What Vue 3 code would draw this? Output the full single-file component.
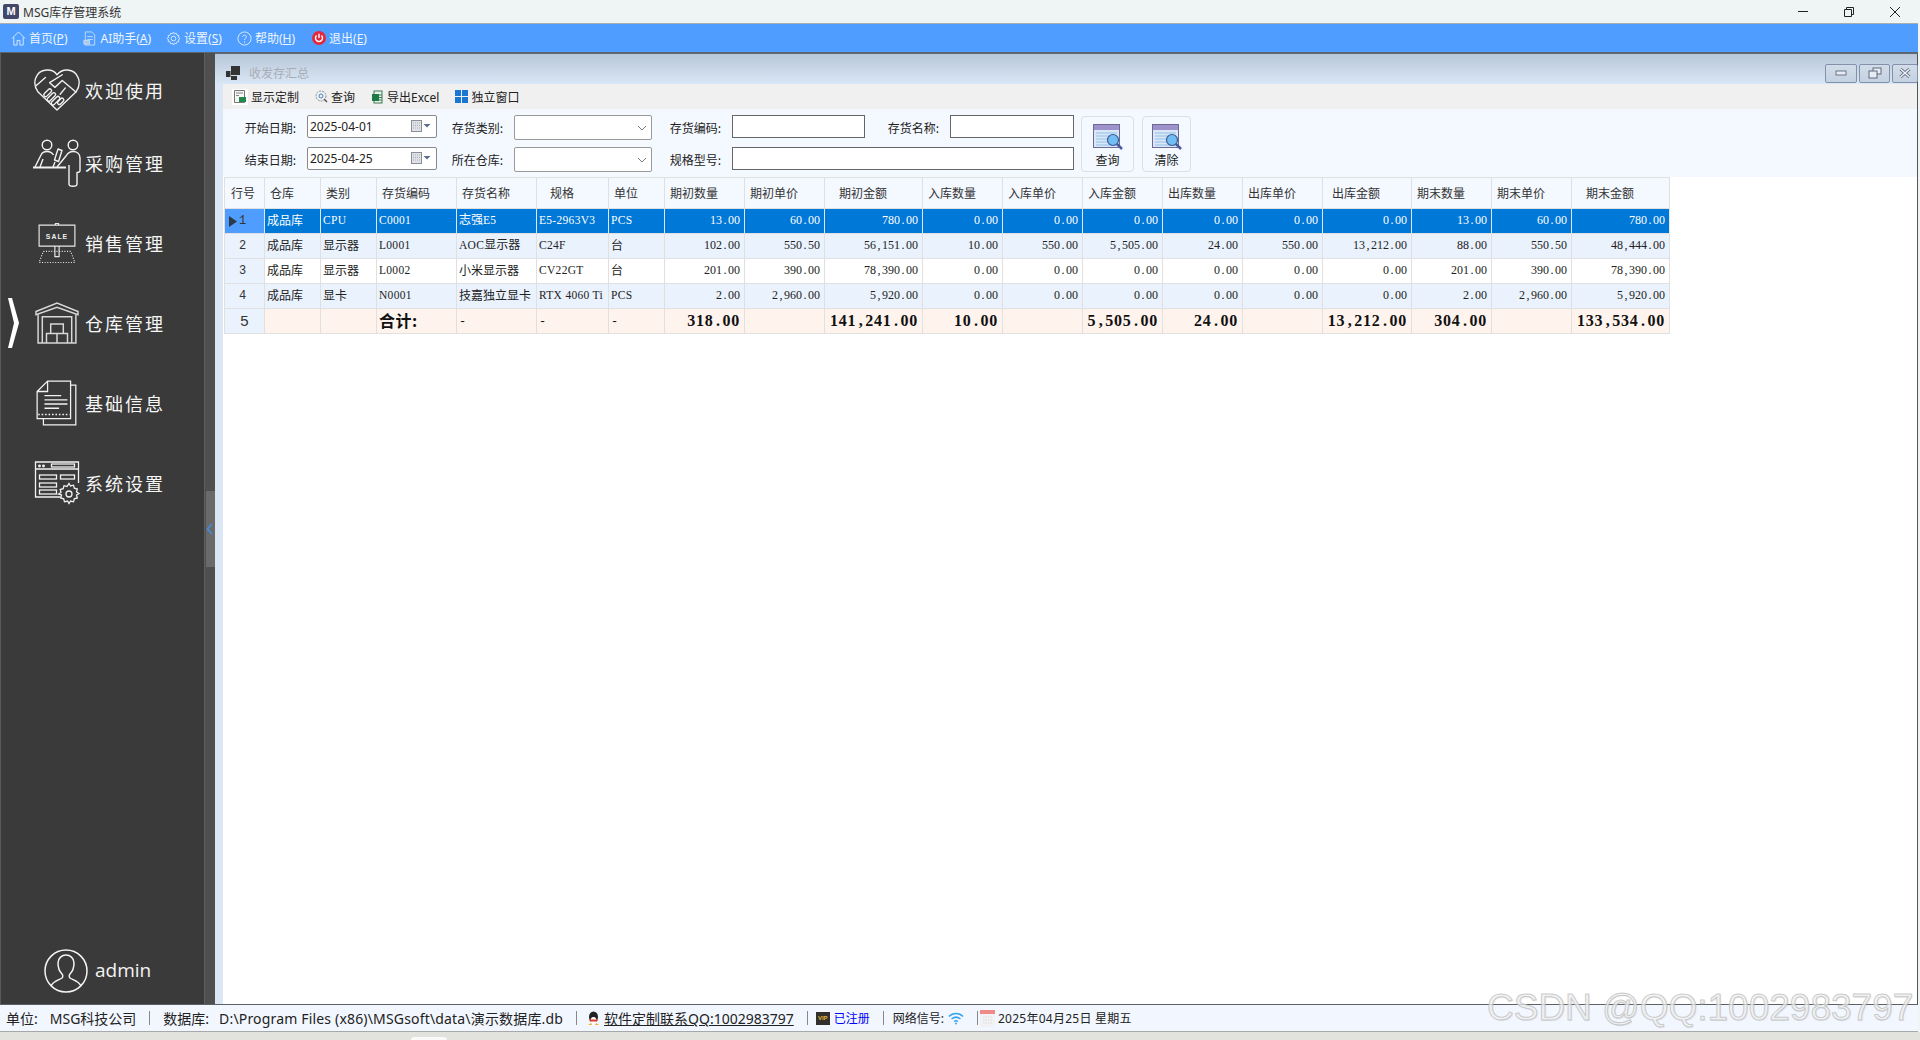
<script setup>
const columns = [
  { t: '行号', w: 40, p: 6 }, { t: '仓库', w: 56, p: 5 }, { t: '类别', w: 56, p: 5 }, { t: '存货编码', w: 80, p: 5 },
  { t: '存货名称', w: 80, p: 5 }, { t: '规格', w: 72, p: 13 }, { t: '单位', w: 56, p: 5 }, { t: '期初数量', w: 80, p: 5 },
  { t: '期初单价', w: 80, p: 5 }, { t: '期初金额', w: 98, p: 14 }, { t: '入库数量', w: 80, p: 5 }, { t: '入库单价', w: 80, p: 5 },
  { t: '入库金额', w: 80, p: 5 }, { t: '出库数量', w: 80, p: 5 }, { t: '出库单价', w: 80, p: 5 }, { t: '出库金额', w: 89, p: 9 },
  { t: '期末数量', w: 80, p: 5 }, { t: '期末单价', w: 80, p: 5 }, { t: '期末金额', w: 98, p: 14 }
]
const rows = [
  ['成品库', 'CPU', 'C0001', '志强E5', 'E5-2963V3', 'PCS', '13.00', '60.00', '780.00', '0.00', '0.00', '0.00', '0.00', '0.00', '0.00', '13.00', '60.00', '780.00'],
  ['成品库', '显示器', 'L0001', 'AOC显示器', 'C24F', '台', '102.00', '550.50', '56,151.00', '10.00', '550.00', '5,505.00', '24.00', '550.00', '13,212.00', '88.00', '550.50', '48,444.00'],
  ['成品库', '显示器', 'L0002', '小米显示器', 'CV22GT', '台', '201.00', '390.00', '78,390.00', '0.00', '0.00', '0.00', '0.00', '0.00', '0.00', '201.00', '390.00', '78,390.00'],
  ['成品库', '显卡', 'N0001', '技嘉独立显卡', 'RTX 4060 Ti', 'PCS', '2.00', '2,960.00', '5,920.00', '0.00', '0.00', '0.00', '0.00', '0.00', '0.00', '2.00', '2,960.00', '5,920.00']
]
const total = ['', '', '合计:', '-', '-', '-', '318.00', '', '141,241.00', '10.00', '', '5,505.00', '24.00', '', '13,212.00', '304.00', '', '133,534.00']
const segs = (s) => s.split(/([\u4e00-\u9fff:]+|[.,])/).filter(Boolean).map((x) => ({
  x,
  c: /[\u4e00-\u9fff:]/.test(x) ? 'cj' : /^[.,]$/.test(x) ? 'pu' : x === '-' ? 'da' : 'la'
}))
</script>

<template>
  <div class="app">
    <header class="titlebar">
      <span class="logo">M</span>
      <span class="apptitle">MSG库存管理系统</span>
      <div class="winctl">
        <svg width="12" height="12" viewBox="0 0 12 12"><path d="M1 5.500H11" stroke="#222" fill="none"/></svg>
        <svg width="12" height="12" viewBox="0 0 12 12"><path d="M1.500 3.500h7v7h-7zM3.500 3.500V1.500h7v7H8.500" stroke="#222" fill="none"/></svg>
        <svg width="12" height="12" viewBox="0 0 12 12"><path d="M1 1L11 11M11 1L1 11" stroke="#222" fill="none"/></svg>
      </div>
    </header>

    <nav class="menubar">
      <span class="mi">
        <svg width="15" height="15" viewBox="0 0 16 16" fill="none" stroke="#dcebff"><path d="M1 8L8 1l7 7M3 6.500V15h3.500v-5h3v5H13V6.500"/></svg>
        <span>首页(<u>P</u>)</span>
      </span>
      <span class="mi">
        <svg width="15" height="15" viewBox="0 0 16 16" fill="none" stroke="#c8dcf5"><path d="M3.500 1h7l3 3v11h-10zM5.500 6h6M5.500 9h6"/><path d="M2 10h6v4H2z" fill="#a9c8ee"/></svg>
        <span>AI助手(<u>A</u>)</span>
      </span>
      <span class="mi">
        <svg width="15" height="15" viewBox="0 0 16 16" fill="none" stroke="#d4e6fd"><circle cx="8" cy="8" r="2.500"/><path d="M8 1l1 2 2-.6 .7 2 2.100.5-.6 2L15 8l-1.800 1.100.6 2-2.100.5-.7 2-2-.6-1 2-1-2-2 .6-.7-2-2.100-.5.6-2L1 8l1.800-1.100-.6-2 2.100-.5.7-2 2 .6z"/></svg>
        <span>设置(<u>S</u>)</span>
      </span>
      <span class="mi">
        <svg width="15" height="15" viewBox="0 0 16 16" fill="none" stroke="#dcebff"><circle cx="8" cy="8" r="7"/><path d="M6 6.200C6 3.800 10 3.800 10 6.200 10 7.800 8 7.800 8 9.500M8 11v1.500"/></svg>
        <span>帮助(<u>H</u>)</span>
      </span>
      <span class="mi exit">
        <svg width="14" height="14" viewBox="0 0 16 16"><circle cx="8" cy="8" r="8" fill="#e5283c"/><path d="M5.200 5.200a4 4 0 1 0 5.600 0M8 3v5" stroke="#fff" stroke-width="1.600" fill="none"/></svg>
        <span>退出(<u>E</u>)</span>
      </span>
    </nav>

    <main class="main">
      <aside class="sidebar">
        <div class="nav-item">
          <svg class="ni" width="46" height="42" viewBox="0 0 44 40" fill="none" stroke="#f2f2f2" stroke-width="1.300" stroke-linejoin="round" stroke-linecap="round">
            <path d="M22 39L4 22C-2 14 1 2 12 1c4.500-.3 8 1.500 10 4.500C24.500 2.500 28 .7 32 1c11 1 14 13 8 21z"/>
            <path d="M27 5.500L15 13l5 4.500 7-6.500 13 11"/>
            <path d="M2 16l9-8M30 18l-5 6"/>
            <rect x="11.500" y="18" width="3.400" height="9" rx="1.700" transform="rotate(45 13 22.500)"/>
            <rect x="15" y="21.500" width="3.400" height="10" rx="1.700" transform="rotate(45 16.500 26.500)"/>
            <rect x="19" y="25" width="3.400" height="10" rx="1.700" transform="rotate(45 20.500 30)"/>
            <rect x="23.500" y="27" width="3.400" height="7" rx="1.700" transform="rotate(45 25 31)"/>
          </svg>
          <span class="nt">欢迎使用</span>
        </div>
        <div class="nav-item">
          <svg class="ni" width="50" height="48" viewBox="0 0 48 48" fill="none" stroke="#f2f2f2" stroke-width="1.400" stroke-linejoin="round">
            <circle cx="14" cy="6" r="4.800"/><circle cx="40" cy="6" r="4.800"/>
            <path d="M0 28.500H33" stroke-width="1.800"/>
            <path d="M2 28L8 16c1-2.500 3-3.500 6-3.500 3 0 5 1 6.500 3.500M7 28l3-8M20 28l2-5"/>
            <path d="M25 10l4 1.500-3.500 11-4-1.500z"/>
            <path d="M24 28L33 17c1.500-2.500 4-4.500 7-4.500 4 0 7 2.500 7 6.500v12.500c0 1.500-1.500 2-3 2V45c0 3-8 3-8 0V26"/>
          </svg>
          <span class="nt">采购管理</span>
        </div>
        <div class="nav-item">
          <svg class="ni" width="38" height="40" viewBox="0 0 36 38" fill="none" stroke="#e8e8e8" stroke-width="1.100">
            <path d="M16.500 2V.5h3V2M1 2h34v20H1zM16 22h4v10h-4z"/>
            <text x="18" y="15.500" class="saletxt" text-anchor="middle">SALE</text>
            <path d="M5 27h26l4 10.500H1z" stroke-dasharray="1 1.500"/>
          </svg>
          <span class="nt">销售管理</span>
        </div>
        <div class="nav-item active">
          <svg class="chev" width="14" height="52" viewBox="0 0 14 52"><path d="M2 1H6L13 26 6 51H2L8 26z" fill="#fff"/></svg>
          <svg class="ni" width="42" height="42" viewBox="0 0 40 40" fill="none" stroke="#d8d8d8" stroke-width="1.400">
            <path d="M0 9L20 1l20 8v3L20 5 0 12z"/>
            <path d="M2 12v27h36V12M6 39V14h28v25M2 39h36"/>
            <path d="M14 30V21h12v9M10 39v-9h10v9M20 30h10v9" />
          </svg>
          <span class="nt">仓库管理</span>
        </div>
        <div class="nav-item">
          <svg class="ni" width="42" height="46" viewBox="0 0 40 44" fill="none" stroke="#f2f2f2" stroke-width="1.200">
            <path d="M1 11L11 1h22v36H1zM1 11h10V1"/>
            <path d="M33 5h5v38H7v-6"/>
            <path d="M8 15h16v0M8 19h22M8 23h22M8 27h14" stroke-width="1.300"/>
            <path d="M2 33h30" stroke-dasharray="1.500 1.800"/>
          </svg>
          <span class="nt">基础信息</span>
        </div>
        <div class="nav-item">
          <svg class="ni" width="46" height="44" viewBox="0 0 45 44" fill="none" stroke="#f2f2f2" stroke-width="1.300">
            <path d="M26 36H1V1h43v21M1 8h43"/>
            <circle cx="5" cy="5" r=".8"/><circle cx="9" cy="5" r=".8"/>
            <rect x="17" y="3" width="23" height="3"/>
            <rect x="5" y="14" width="17" height="4"/><rect x="26" y="14" width="14" height="4"/>
            <rect x="5" y="22" width="17" height="4"/><rect x="5" y="29" width="17" height="4"/>
            <circle cx="34.500" cy="33" r="3"/>
            <path d="M34.500 22.500l1.500 2.500 3-.8.800 3 3 .8-.8 3 2.500 1.500-2.500 1.500.8 3-3 .8-.8 3-3-.8-1.500 2.500-1.500-2.500-3 .8-.8-3-3-.8.8-3L24 33l2.500-1.500-.8-3 3-.8.800-3 3 .8z"/>
          </svg>
          <span class="nt">系统设置</span>
        </div>
        <div class="user">
          <svg width="44" height="44" viewBox="0 0 44 44" fill="none" stroke="#f4f4f4" stroke-width="1.500">
            <circle cx="22" cy="22" r="21"/>
            <path d="M7 37c2-5 8-6 11-8 1-1 1-3 0-4-3-3-4-7-4-11 0-5 4-8 8-8s8 3 8 8c0 4-1 8-4 11-1 1-1 3 0 4 3 2 9 3 11 8"/>
          </svg>
          <span class="uname">admin</span>
        </div>
      </aside>

      <div class="splitter">
        <div class="handle">
          <svg width="8" height="12" viewBox="0 0 8 12"><path d="M6 1L1.500 6 6 11" stroke="#3d8fe8" stroke-width="1.500" fill="none"/></svg>
        </div>
      </div>

      <section class="mdi">
        <div class="wintitle">
          <svg width="15" height="15" viewBox="0 0 15 15"><rect x="5" y="0" width="9" height="9" fill="#333"/><rect x="0" y="5" width="4.500" height="6" fill="#333"/><rect x="5" y="10" width="6" height="4" fill="#333"/></svg>
          <span class="wintext">收发存汇总</span>
          <div class="mdictl">
            <button class="mb"><svg width="12" height="8" viewBox="0 0 12 8"><rect x="1" y="2" width="10" height="4" fill="#e8edf5" stroke="#6b7488"/></svg></button>
            <button class="mb"><svg width="14" height="12" viewBox="0 0 14 12" fill="#e8edf5" stroke="#5f687c"><rect x="5" y="1" width="8" height="6"/><rect x="1" y="4" width="8" height="7"/></svg></button>
            <button class="mb"><svg width="12" height="10" viewBox="0 0 12 10"><path d="M1.500 1L10.500 9M10.500 1L1.500 9" stroke="#6b7488" stroke-width="3.200"/><path d="M1.500 1L10.500 9M10.500 1L1.500 9" stroke="#f0f3f8" stroke-width="1.400"/></svg></button>
          </div>
        </div>

        <div class="content">
          <div class="toolbar">
            <span class="ti">
              <span class="tbox"><svg width="12" height="13" viewBox="0 0 12 13"><path d="M.5.500h10v12H.5z" fill="#f7f7f7" stroke="#777"/><path d="M2 3h7M2 5.500h3" stroke="#888"/><rect x="5" y="7" width="7" height="5" fill="#1f8a4c"/></svg></span>
              <span>显示定制</span>
            </span>
            <span class="ti">
              <svg width="13" height="13" viewBox="0 0 13 13" fill="none"><circle cx="6" cy="6" r="5" stroke="#8b9096" stroke-dasharray="2 1"/><circle cx="6" cy="6" r="2" stroke="#4a86c7"/><path d="M9 9l3 3" stroke="#555" stroke-width="1.500"/></svg>
              <span>查询</span>
            </span>
            <span class="ti">
              <svg width="13" height="14" viewBox="0 0 13 14"><rect x="3" y="1" width="8" height="12" fill="#e8f2ea" stroke="#3d7a52"/><rect x="1" y="4" width="7" height="7" fill="#1e7a44"/><path d="M8 5h3M8 7.500h3M8 10h3" stroke="#3d7a52"/></svg>
              <span>导出Excel</span>
            </span>
            <span class="ti">
              <svg width="13" height="13" viewBox="0 0 13 13" fill="#1976d2"><rect width="6" height="6"/><rect x="7" width="6" height="6"/><rect y="7" width="6" height="6"/><rect x="7" y="7" width="6" height="6"/></svg>
              <span>独立窗口</span>
            </span>
          </div>

          <div class="filter">
            <label class="lb">开始日期:</label>
            <div class="inp date"><span>2025-04-01</span><svg width="20" height="13" viewBox="0 0 20 13"><rect x=".5" y=".5" width="10" height="11" fill="#dfe3e8" stroke="#8a8f96"/><path d="M2 3h7M2 5.500h7M2 8h7" stroke="#a9adb3" stroke-dasharray="1 1"/><path d="M12.500 4h7l-3.500 3.500z" fill="#5c6f8c"/></svg></div>
            <label class="lb">存货类别:</label>
            <div class="inp combo"><svg width="10" height="6" viewBox="0 0 10 6"><path d="M1 1l4 4 4-4" stroke="#777" fill="none"/></svg></div>
            <label class="lb">存货编码:</label>
            <div class="inp box"></div>
            <label class="lb">存货名称:</label>
            <div class="inp box"></div>
            <button class="qbtn first">
              <svg width="30" height="28" viewBox="0 0 30 28"><rect x=".5" y=".5" width="26" height="23" fill="#dbe7f6" stroke="#6a6a95"/><rect x="1" y="1" width="25" height="5" fill="#9d92c9"/><path d="M3 9h21M3 12h21M3 15h21M3 18h21M3 21h21" stroke="#8fc0e6"/><circle cx="20" cy="16" r="5.500" fill="#72bdf2" stroke="#3a5a99" stroke-width="1.200"/><path d="M24 20l5 5" stroke="#4a5a9c" stroke-width="2.500"/></svg>
              <span>查询</span>
            </button>
            <button class="qbtn second">
              <svg width="30" height="28" viewBox="0 0 30 28"><rect x=".5" y=".5" width="26" height="23" fill="#dbe7f6" stroke="#6a6a95"/><rect x="1" y="1" width="25" height="5" fill="#9d92c9"/><path d="M3 9h21M3 12h21M3 15h21M3 18h21M3 21h21" stroke="#8fc0e6"/><circle cx="20" cy="16" r="5.500" fill="#72bdf2" stroke="#3a5a99" stroke-width="1.200"/><path d="M24 20l5 5" stroke="#4a5a9c" stroke-width="2.500"/></svg>
              <span>清除</span>
            </button>
            <label class="lb">结束日期:</label>
            <div class="inp date"><span>2025-04-25</span><svg width="20" height="13" viewBox="0 0 20 13"><rect x=".5" y=".5" width="10" height="11" fill="#dfe3e8" stroke="#8a8f96"/><path d="M2 3h7M2 5.500h7M2 8h7" stroke="#a9adb3" stroke-dasharray="1 1"/><path d="M12.500 4h7l-3.500 3.500z" fill="#5c6f8c"/></svg></div>
            <label class="lb">所在仓库:</label>
            <div class="inp combo"><svg width="10" height="6" viewBox="0 0 10 6"><path d="M1 1l4 4 4-4" stroke="#777" fill="none"/></svg></div>
            <label class="lb">规格型号:</label>
            <div class="inp box wide"></div>
          </div>

          <table class="grid">
            <colgroup><col v-for="c in columns" :key="c.t" :style="{ width: c.w + 'px' }"></colgroup>
            <thead>
              <tr><th v-for="c in columns" :key="c.t" :style="{ paddingLeft: c.p + 'px' }">{{ c.t }}</th></tr>
            </thead>
            <tbody>
              <tr v-for="(r, i) in rows" :key="i" :class="{ sel: i === 0, alt: i % 2 === 1 }">
                <td class="rh">
                  <svg v-if="i === 0" class="tri" width="8" height="11" viewBox="0 0 8 11"><path d="M0 0l8 5.500L0 11z" fill="#2f3a46"/></svg>{{ i + 1 }}
                </td>
                <td v-for="(v, j) in r" :key="j" :class="{ num: j >= 6 }">
                  <span v-for="(s, k) in segs(v)" :key="k" :class="s.c">{{ s.x }}</span>
                </td>
              </tr>
              <tr class="total">
                <td class="rh">5</td>
                <td v-for="(v, j) in total" :key="j" :class="{ num: j >= 6 }">
                  <span v-for="(s, k) in segs(v)" :key="k" :class="s.c">{{ s.x }}</span>
                </td>
              </tr>
            </tbody>
          </table>
        </div>
      </section>
    </main>

    <footer class="status">
      <span class="st s1">单位:</span>
      <span class="st s2">MSG科技公司</span>
      <i class="sep"></i>
      <span class="st s3">数据库:</span>
      <span class="st s4">D:\Program Files (x86)\MSGsoft\data\演示数据库.db</span>
      <i class="sep"></i>
      <svg class="qq" width="13" height="15" viewBox="0 0 13 15"><ellipse cx="6.500" cy="6" rx="4.500" ry="5.500" fill="#222"/><ellipse cx="6.500" cy="9.500" rx="3" ry="3.500" fill="#fff"/><path d="M2 8.500h9l-1 2H3z" fill="#e03a2a"/><path d="M1 14h4l-1-2zM12 14H8l1-2z" fill="#f2b022"/></svg>
      <u class="st link">软件定制联系QQ:1002983797</u>
      <i class="sep"></i>
      <span class="vip">VIP</span>
      <span class="st reg">已注册</span>
      <i class="sep sep-net"></i>
      <span class="st small">网络信号:</span>
      <svg class="wifi" width="16" height="13" viewBox="0 0 16 13" fill="none" stroke="#35a3ee" stroke-width="1.500"><path d="M1 4.500C5 .5 11 .5 15 4.500M3.500 7c3-2.500 6-2.500 9 0M6 9.500c1.500-1 2.500-1 4 0"/><circle cx="8" cy="11.500" r="1" fill="#35a3ee" stroke="none"/></svg>
      <i class="sep sep-cal"></i>
      <svg class="cal" width="15" height="17" viewBox="0 0 15 17"><rect width="15" height="17" fill="#f2f2f4"/><rect width="15" height="4" fill="#ef8a8a"/><path d="M3 7h9M3 10h9M3 13h9" stroke="#d8dbe0" stroke-dasharray="1.500 1"/></svg>
      <span class="st small date-text">2025年04月25日 星期五</span>
    </footer>
    <div class="bottom"><span class="tab"></span></div>

    <div class="watermark">CSDN @QQ:1002983797</div>
  </div>
</template>

<style scoped>
.app {
  position: relative;
  width: 1920px;
  height: 1040px;
  overflow: hidden;
  display: flex;
  flex-direction: column;
  background: #eff4f5;
  font-family: "Noto Sans", "Noto Sans CJK SC", sans-serif;
  font-size: 12px;
  color: #222;
}
.titlebar {
  height: 23px;
  display: flex;
  align-items: center;
  padding-left: 3px;
  flex: none;
}
.logo {
  width: 16px;
  height: 15px;
  background: #42486a;
  border-radius: 2px;
  color: #fff;
  font-size: 11px;
  font-weight: 700;
  line-height: 15px;
  text-align: center;
  font-family: "Liberation Sans", sans-serif;
}
.apptitle { margin-left: 4px; color: #333; }
.winctl {
  margin-left: auto;
  display: flex;
  gap: 34px;
  padding-right: 19px;
  align-items: center;
}
.menubar {
  height: 30px;
  flex: none;
  margin-right: 2px;
  background: #4f9eff;
  border-top: 1px solid #a9adb0;
  border-bottom: 1px solid #5c6670;
  box-sizing: border-box;
  display: flex;
  align-items: center;
  padding-left: 11px;
  gap: 15px;
  color: #eef5ff;
}
.mi { display: flex; align-items: center; gap: 3px; }
.exit { margin-left: 2px; }
.main { flex: none; height: 951px; display: flex; margin-right: 2px; }
.sidebar {
  width: 205px;
  box-sizing: border-box;
  background: #3a3a3a;
  border-left: 1px solid #5a5a5a;
  border-right: 1px solid #5f5f5f;
  padding-top: 17px;
  display: flex;
  flex-direction: column;
  gap: 40px;
  flex: none;
}
.nav-item {
  position: relative;
  height: 40px;
  display: flex;
  align-items: center;
  padding-left: 31px;
  color: #f6f6f6;
}
.nav-item:first-child { margin-bottom: -7px; }
.ni { width: 50px; flex: none; }
.nt {
  margin-left: 3px;
  font-family: "Noto Sans CJK SC", sans-serif;
  font-size: 18px;
  letter-spacing: 2px;
}
.chev { position: absolute; left: 5px; top: -6px; }
.saletxt {
  font-family: "Liberation Sans", sans-serif;
  font-size: 6.500px;
  font-weight: 700;
  letter-spacing: 1px;
  fill: #eee;
  stroke: none;
}
.user {
  margin-top: auto;
  padding: 0 0 11px 43px;
  display: flex;
  align-items: center;
  gap: 7px;
}
.uname {
  font-family: "Open Sans", sans-serif;
  font-size: 19px;
  color: #f4f4f4;
  margin-bottom: 2px;
}
.splitter {
  width: 10px;
  flex: none;
  background: #4f4f4f;
  display: flex;
  align-items: center;
  justify-content: center;
}
.handle {
  width: 9px;
  height: 76px;
  background: #6a6a6a;
  display: flex;
  align-items: center;
  justify-content: center;
}
.mdi {
  flex: 1;
  min-width: 0;
  display: flex;
  flex-direction: column;
  background: #dbe7f5;
  border-right: 1px solid #555;
  border-top: 1px solid #5f6871;
  box-sizing: border-box;
}
.wintitle {
  height: 30px;
  flex: none;
  box-sizing: border-box;
  padding: 8px 0 0 11px;
  display: flex;
  align-items: center;
  background: linear-gradient(#b8c7d9, #d9e6f5);
}
.wintext { margin-left: 8px; color: #a9adb3; }
.mdictl { margin-left: auto; display: flex; gap: 2px; }
.mb {
  width: 31px;
  height: 19px;
  padding: 0;
  border: 1px solid #8391aa;
  border-radius: 2px;
  background: linear-gradient(#d2dde9, #c4d1e1);
  display: flex;
  align-items: center;
  justify-content: center;
}
.mb:first-child { width: 32px; }
.mb:last-child { width: 26px; margin-right: -1px; }
.content {
  flex: 1;
  margin-left: 8px;
  background: #fff;
  display: flex;
  flex-direction: column;
  min-height: 0;
}
.toolbar {
  height: 25px;
  flex: none;
  background: #f0f0f0;
  display: flex;
  align-items: center;
  padding-left: 9px;
  gap: 16px;
}
.ti { display: flex; align-items: center; gap: 3px; }
.tbox {
  width: 16px;
  height: 16px;
  background: #fff;
  display: flex;
  align-items: center;
  justify-content: center;
}
.filter {
  height: 68px;
  flex: none;
  box-sizing: border-box;
  background: #f4f8ff;
  padding-top: 6px;
  display: grid;
  grid-template-columns: 84px 130px 77px 138px 80px 133px 85px 124px 60px 57px;
  grid-template-rows: 25px 25px;
  row-gap: 7px;
}
.lb {
  line-height: 26px;
  text-align: right;
  padding-right: 11px;
  font-family: "Noto Sans CJK SC", sans-serif;
}
.inp {
  box-sizing: border-box;
  background: #fff;
  border: 1px solid #777;
  display: flex;
  align-items: center;
}
.date {
  height: 23px;
  border-radius: 2px;
  border-color: #8a8a8a;
  padding: 0 5px 0 2px;
  justify-content: space-between;
}
.combo {
  height: 25px;
  border-radius: 2px;
  border-color: #999;
  justify-content: flex-end;
  padding-right: 4px;
}
.box { height: 23px; border-color: #666; }
.wide { grid-column: 6 / 9; }
.qbtn {
  grid-row: 1 / 3;
  margin-top: 1px;
  padding: 7px 0 0;
  height: 56px;
  box-sizing: border-box;
  border: 1px solid #dcdfe4;
  border-radius: 4px;
  background: #f4f8ff;
  font: inherit;
  color: #222;
  display: flex;
  flex-direction: column;
  align-items: center;
  gap: 0;
  line-height: 17px;
}
.first { grid-column: 9; margin-left: 7px; width: 53px; }
.second { grid-column: 10; margin-left: 8px; width: 49px; }
.grid {
  margin: 0 0 0 1px;
  width: 1445px;
  table-layout: fixed;
  border-collapse: separate;
  border-spacing: 0;
  border-top: 1px solid #e0e0e0;
  border-left: 1px solid #e0e0e0;
  font-family: "Noto Sans CJK SC", sans-serif;
  font-size: 12px;
}
.grid th {
  height: 31px;
  box-sizing: border-box;
  font-weight: 400;
  text-align: left;
  padding: 0 0 2px;
  background: #f4f8ff;
  color: #333;
  border-right: 1px solid #e0e0e0;
  border-bottom: 1px solid #e0e0e0;
}
.grid td {
  height: 25px;
  line-height: 18px;
  box-sizing: border-box;
  padding: 0 0 3px 2px;
  white-space: pre;
  overflow: hidden;
  border-right: 1px solid #e0e0e0;
  border-bottom: 1px solid #e0e0e0;
  background: #fff;
}
.grid tr.alt td { background: #eaf2fd; }
.grid tr.sel td { background: #0078d7; color: #fff; border-right-color: #dfe8f2; }
.grid td.num { text-align: right; padding: 0 4px 3px 0; }
.grid td.rh {
  background: #eaf2fd !important;
  color: #333 !important;
  text-align: center;
  padding: 0 4px 0 0;
  font-size: 12px;
  position: relative;
  font-family: "Liberation Mono", monospace;
}
.grid tr.sel td.rh { background: #4f9eff !important; }
.tri { position: absolute; left: 4px; top: 7px; }
.la {
  font-family: "Liberation Serif", serif;
  font-size: 11.500px;
  letter-spacing: .3px;
}
.num .la { font-size: 12px; letter-spacing: 0; }
.pu {
  font-family: "Liberation Serif", serif;
  font-size: 12px;
  margin-left: 1.500px;
  letter-spacing: 1.500px;
}
.da { font-family: "Liberation Mono", monospace; font-size: 12px; font-weight: 400; }
.grid tr.total td {
  background: #fff3ee;
  color: #111;
  padding-bottom: 0;
}
.grid tr.total .la,
.grid tr.total .pu {
  font-family: "Liberation Serif", serif;
  font-weight: 700;
  font-size: 16px;
  letter-spacing: .8px;
}
.grid tr.total .pu { margin-left: 2.400px; letter-spacing: 2.400px; }
.grid tr.total .cj {
  font-weight: 700;
  font-size: 16px;
  letter-spacing: .5px;
}
.grid tr.total td.rh {
  font-family: "Liberation Sans", sans-serif;
  font-weight: 400;
  font-size: 15px;
  padding: 0;
  background: #eaf2fd !important;
}
.status {
  height: 28px;
  flex: none;
  margin-right: 2px;
  box-sizing: border-box;
  background: #f2f7ff;
  border-top: 1px solid #5d6166;
  border-bottom: 1px solid #a6a8aa;
  display: flex;
  align-items: center;
  padding-left: 6px;
  font-size: 14px;
}
.st { white-space: nowrap; }
.s2 { margin-left: 12px; }
.s4 { margin-left: 10px; letter-spacing: .17px; }
.sep {
  width: 1px;
  height: 14px;
  background: #888;
  margin: 0 13px;
}
.sep-net { margin-right: 9px; }
.sep-cal { margin-right: 6px; }
.link { margin-left: 4px; }
.qq { margin-left: -3px; }
.vip {
  width: 14px;
  height: 13px;
  background: #33302c;
  color: #e0b63c;
  font: 700 6px "Liberation Sans", sans-serif;
  line-height: 13px;
  text-align: center;
  margin-left: -5px;
}
.reg { margin-left: 4px; font-size: 12px; color: #0000ff; }
.small { font-size: 12px; }
.wifi { margin-left: 4px; }
.cal { margin-left: -4px; }
.date-text { margin-left: 3px; letter-spacing: .25px; }
.bottom { flex: 1; background: #e3e3de; padding-left: 411px; display: flex; align-items: flex-end; }
.tab { width: 36px; height: 3px; background: #fafafa; border-radius: 3px 3px 0 0; }
.watermark {
  position: absolute;
  left: 1487px;
  top: 988px;
  font-family: "Liberation Sans", sans-serif;
  font-size: 37px;
  line-height: 40px;
  white-space: nowrap;
  color: rgba(245, 245, 245, .7);
  -webkit-text-stroke: 1px rgba(190, 190, 190, .8);
  text-shadow: 1px 1px 1px rgba(120, 120, 120, .15);
}
</style>

<style>
html, body { margin: 0; padding: 0; background: #eff4f5; }
</style>
